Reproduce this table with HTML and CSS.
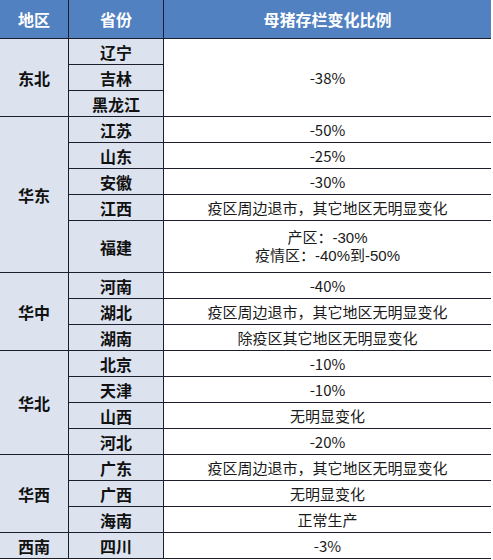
FILE: index.html
```html
<!DOCTYPE html>
<html lang="zh">
<head>
<meta charset="utf-8">
<link rel="stylesheet" href="styles.css">
</head>
<body>
<div class="grid">
  <div class="cell head">地区</div>
  <div class="cell head">省份</div>
  <div class="cell head">母猪存栏变化比例</div>

  <div class="cell region r3">东北</div>
  <div class="cell prov">辽宁</div>
  <div class="cell val r3">-38%</div>
  <div class="cell prov">吉林</div>
  <div class="cell prov">黑龙江</div>

  <div class="cell region r6">华东</div>
  <div class="cell prov">江苏</div>
  <div class="cell val">-50%</div>
  <div class="cell prov">山东</div>
  <div class="cell val">-25%</div>
  <div class="cell prov">安徽</div>
  <div class="cell val">-30%</div>
  <div class="cell prov">江西</div>
  <div class="cell val">疫区周边退市，其它地区无明显变化</div>
  <div class="cell prov r2">福建</div>
  <div class="cell val r2 two"><span>产区：-30%</span><span>疫情区：-40%到-50%</span></div>

  <div class="cell region r3">华中</div>
  <div class="cell prov">河南</div>
  <div class="cell val">-40%</div>
  <div class="cell prov">湖北</div>
  <div class="cell val">疫区周边退市，其它地区无明显变化</div>
  <div class="cell prov">湖南</div>
  <div class="cell val">除疫区其它地区无明显变化</div>

  <div class="cell region r4">华北</div>
  <div class="cell prov">北京</div>
  <div class="cell val">-10%</div>
  <div class="cell prov">天津</div>
  <div class="cell val">-10%</div>
  <div class="cell prov">山西</div>
  <div class="cell val">无明显变化</div>
  <div class="cell prov">河北</div>
  <div class="cell val">-20%</div>

  <div class="cell region r3">华西</div>
  <div class="cell prov">广东</div>
  <div class="cell val">疫区周边退市，其它地区无明显变化</div>
  <div class="cell prov">广西</div>
  <div class="cell val">无明显变化</div>
  <div class="cell prov">海南</div>
  <div class="cell val">正常生产</div>

  <div class="cell region">西南</div>
  <div class="cell prov">四川</div>
  <div class="cell val">-3%</div>
</div>
</body>
</html>
```
FILE: styles.css
```css
html, body {
  margin: 0;
  padding: 0;
  background: #ffffff;
}
.grid {
  display: grid;
  grid-template-columns: 68px 94px 327px;
  grid-template-rows: 38px repeat(20, 25px);
  gap: 1px;
  padding: 0 1px 1px 0;
  width: 490px;
  background: #1b1e2c;
  font-family: "Noto Sans CJK SC", "Liberation Sans", sans-serif;
}
.cell {
  display: flex;
  align-items: center;
  justify-content: center;
  text-align: center;
  line-height: 1;
}
.head {
  background: #5181c0;
  color: #ffffff;
  font-weight: 700;
  font-size: 16px;
}
.region, .prov {
  background: #dce3ef;
  color: #111111;
  font-weight: 700;
  font-size: 16px;
}
.val {
  background: #ffffff;
  color: #1a1a1a;
  font-size: 15px;
  font-weight: 400;
}
.r2 { grid-row: span 2; }
.r3 { grid-row: span 3; }
.r4 { grid-row: span 4; }
.r6 { grid-row: span 6; }
.two {
  flex-direction: column;
  gap: 3px;
  line-height: 15px;
  font-family: "Liberation Sans", "Noto Sans CJK SC", sans-serif;
}
```
